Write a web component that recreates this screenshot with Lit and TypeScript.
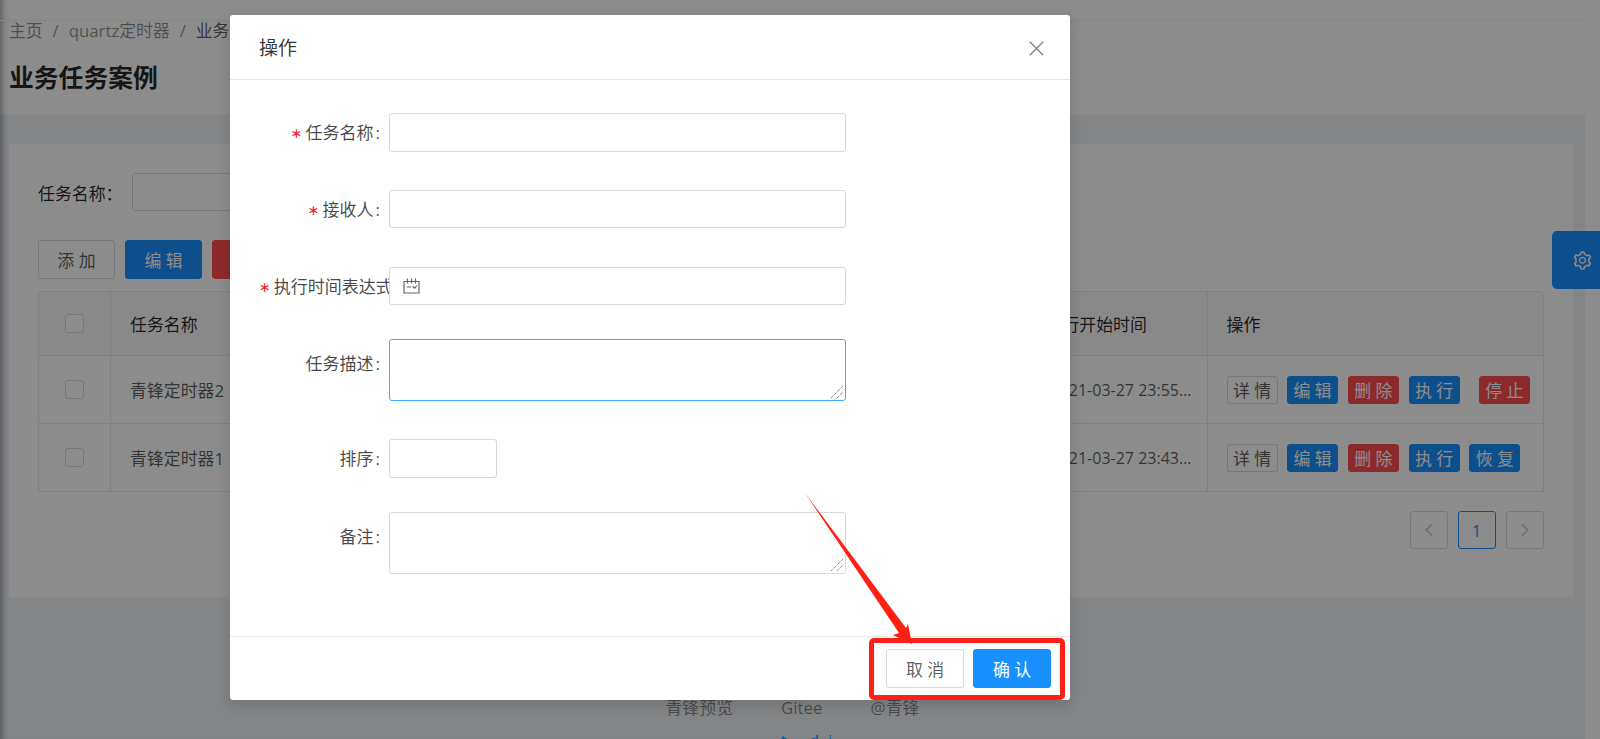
import { LitElement, html, css, svg } from "lit";
import { customElement } from "lit/decorators.js";

const GEAR = "M924.8 625.7l-65.5-56c3.1-19 4.7-38.4 4.7-57.8s-1.6-38.8-4.7-57.8l65.5-56a32.03 32.03 0 0 0 9.3-35.2l-.9-2.6a443.74 443.74 0 0 0-79.7-137.9l-1.8-2.1a32.12 32.12 0 0 0-35.1-9.5l-81.3 28.9c-30-24.6-63.5-44-99.7-57.6l-15.7-85a32.05 32.05 0 0 0-25.8-25.7l-2.7-.5c-52.1-9.4-106.9-9.4-159 0l-2.7.5a32.05 32.05 0 0 0-25.8 25.7l-15.8 85.4a351.86 351.86 0 0 0-99 57.4l-81.9-29.1a32 32 0 0 0-35.1 9.5l-1.8 2.1a446.02 446.02 0 0 0-79.7 137.9l-.9 2.6c-4.5 12.5-.8 26.5 9.3 35.2l66.3 56.6c-3.1 18.8-4.6 38-4.6 57.1 0 19.2 1.5 38.4 4.6 57.1L99 625.5a32.03 32.03 0 0 0-9.3 35.2l.9 2.6c18.1 50.4 44.9 96.9 79.7 137.9l1.8 2.1a32.12 32.12 0 0 0 35.1 9.5l81.9-29.1c29.8 24.5 63.1 43.9 99 57.4l15.8 85.4a32.05 32.05 0 0 0 25.8 25.7l2.7.5a449.4 449.4 0 0 0 159 0l2.7-.5a32.05 32.05 0 0 0 25.8-25.7l15.7-85a350 350 0 0 0 99.7-57.6l81.3 28.9a32 32 0 0 0 35.1-9.5l1.8-2.1c34.8-41.1 61.6-87.5 79.7-137.9l.9-2.6c4.5-12.3.8-26.3-9.3-35zM788.3 465.9c2.5 15.1 3.8 30.6 3.8 46.1s-1.3 31-3.8 46.1l-6.6 40.1 74.7 63.9a370.03 370.03 0 0 1-42.6 73.6L721 702.8l-31.4 25.8c-23.9 19.6-50.5 35-79.3 45.8l-38.1 14.3-17.9 97a377.5 377.5 0 0 1-85 0l-17.9-97.2-37.8-14.5c-28.5-10.8-55-26.2-78.7-45.7l-31.4-25.9-93.4 33.2c-17-22.9-31.2-47.6-42.6-73.6l75.5-64.5-6.5-40c-2.4-14.9-3.7-30.3-3.7-45.5 0-15.3 1.2-30.6 3.7-45.5l6.5-40-75.5-64.5c11.3-26.1 25.6-50.7 42.6-73.6l93.4 33.2 31.4-25.9c23.7-19.5 50.2-34.9 78.7-45.7l37.9-14.3 17.9-97.2c28.1-3.2 56.8-3.2 85 0l17.9 97 38.1 14.3c28.7 10.8 55.4 26.2 79.3 45.8l31.4 25.8 92.8-32.9c17 22.9 31.2 47.6 42.6 73.6L781.8 426l6.5 39.9zM512 326c-97.2 0-176 78.8-176 176s78.8 176 176 176 176-78.8 176-176-78.8-176-176-176zm79.2 255.2A111.6 111.6 0 0 1 512 614c-29.9 0-58-11.7-79.2-32.8A111.6 111.6 0 0 1 400 502c0-29.9 11.7-58 32.8-79.2C454 401.6 482.1 390 512 390c29.9 0 58 11.6 79.2 32.8A111.6 111.6 0 0 1 624 502c0 29.9-11.7 58-32.8 79.2z";

const rows = [
  { name: "青锋定时器2", who: "admin", desc: "业务任务", time: "2021-03-27 23:55:10", last: "停 止", lastCls: "red wide" },
  { name: "青锋定时器1", who: "admin", desc: "业务任务", time: "2021-03-27 23:43:25", last: "恢 复", lastCls: "blue" },
];

const grip = html`<svg class="grip" viewBox="0 0 14 14"><path d="M1 13 13 1M7 13l6-6" /></svg>`;

@customElement("app-root")
export class AppRoot extends LitElement {
  static styles = css`
    :host {
      display: block;
      position: relative;
      width: 1600px;
      height: 739px;
      overflow: hidden;
      background: #fff;
      font-family: "Open Sans", "Noto Sans CJK SC", sans-serif;
      font-size: 16.9px;
      color: rgba(0, 0, 0, 0.65);
    }
    * { box-sizing: border-box; }

    .main {
      width: 1585px;
      height: 739px;
      overflow: hidden;
      background: #f0f2f5;
      box-shadow: inset 7px 0 6px -5px rgba(0, 21, 41, 0.4);
    }
    .topbar {
      height: 21px;
      background: #fff;
      border-bottom: 1px solid #f5f5f5;
      box-shadow: inset 7px 0 6px -5px rgba(0, 21, 41, 0.4);
    }
    .head {
      height: 94px;
      background: #fff;
      padding: 0 9px;
      box-shadow: inset 7px 0 6px -5px rgba(0, 21, 41, 0.4);
    }
    .crumbs { display: flex; align-items: center; height: 18px; font-size: 16.8px; color: rgba(0, 0, 0, 0.45); white-space: nowrap; }
    .crumbs .sep { margin: 0 10px; }
    .crumbs .cur { color: rgba(0, 0, 0, 0.65); }
    .title { margin: 20px 0 0; font-size: 24.8px; line-height: 36px; font-weight: 600; color: rgba(0, 0, 0, 0.85); }

    .content { padding: 29px 12px 0 9px; }
    .card { height: 453px; background: #fff; padding: 29px 29px 0; }

    .search { display: flex; align-items: center; height: 38px; margin-bottom: 29px; color: rgba(0, 0, 0, 0.85); }
    .search .lbl { width: 94px; white-space: nowrap; }
    .search .field { width: 300px; height: 38px; border: 1px solid #d9d9d9; border-radius: 3px; }

    .toolbar { display: flex; gap: 10px; margin-bottom: 12px; }
    .btn {
      display: flex;
      align-items: center;
      justify-content: center;
      height: 39px;
      width: 77px;
      border: 1px solid #d9d9d9;
      border-radius: 3px;
      background: #fff;
      white-space: nowrap;
    }
    .btn.blue { background: #1890ff; border-color: #1890ff; color: #fff; }
    .btn.red { background: #ff4d4f; border-color: #ff4d4f; color: #fff; }

    .table { border: 1px solid #e8e8e8; border-radius: 3px 3px 0 0; width: 1505.5px; }
    .tr { display: grid; grid-template-columns: 72px 300px 300px 1fr 181px 335px; border-bottom: 1px solid #e8e8e8; height: 68px; }
    .tr.th { height: 64px; background: #fafafa; color: rgba(0, 0, 0, 0.85); }
    .tr:last-child { border-bottom: 0; height: 67px; }
    .td { display: flex; align-items: center; padding: 0 19px; border-right: 1px solid #e8e8e8; min-width: 0; white-space: nowrap; }
    .td:last-child { border-right: 0; }
    .td.check { justify-content: center; padding: 0; }
    .td.when { padding: 0 14px 0 24px; }
    .ell { overflow: hidden; white-space: nowrap; text-overflow: ellipsis; }
    .time { font-size: 16px; }
    .box { width: 19px; height: 19px; border: 1px solid #d9d9d9; border-radius: 3px; background: #fff; }
    .ops { gap: 9.7px; padding-right: 0; }
    .sm { flex: none; height: 28px; width: 51px; box-shadow: 0 1px 0 rgba(0, 0, 0, 0.02); }
    .sm.wide { margin-left: 9.5px; }

    .pager { display: flex; justify-content: flex-end; gap: 10px; margin-top: 19px; width: 1505.5px; }
    .pg { display: flex; align-items: center; justify-content: center; width: 38px; height: 38px; border: 1px solid #d9d9d9; border-radius: 3px; background: #fff; color: rgba(0, 0, 0, 0.25); }
    .pg.on { border-color: #1890ff; color: #1890ff; font-weight: 500; }
    .pg svg { width: 14px; height: 14px; }

    .footer { padding-top: 98px; text-align: center; }
    .links { display: flex; justify-content: center; gap: 48px; height: 26px; line-height: 26px; color: rgba(0, 0, 0, 0.45); }
    .copy { margin-top: 7px; color: #1890ff; line-height: 26px; padding-left: 28px; white-space: pre; }

    .gear {
      position: absolute;
      top: 231px;
      right: 0;
      width: 48px;
      height: 58px;
      padding-left: 12px;
      background: #1890ff;
      border-radius: 5px 0 0 5px;
      display: flex;
      align-items: center;
      justify-content: center;
      color: #fff;
    }
    .gear svg { width: 21px; height: 21px; fill: currentColor; }

    .mask { position: absolute; inset: 0; background: rgba(0, 0, 0, 0.45); }

    .modal {
      position: absolute;
      left: 230px;
      top: 15px;
      width: 840px;
      height: 685px;
      background: #fff;
      border-radius: 3px;
      box-shadow: 0 5px 14px rgba(0, 0, 0, 0.15);
      display: flex;
      flex-direction: column;
    }
    .m-head {
      flex: none;
      height: 65px;
      border-bottom: 1px solid #e8e8e8;
      padding: 0 19px 0 29px;
      display: flex;
      align-items: center;
      justify-content: space-between;
    }
    .m-title { font-size: 19px; color: rgba(0, 0, 0, 0.8); line-height: 1; margin-top: 2px; }
    .close { width: 15px; height: 15px; margin-right: 7px; margin-top: 2px; stroke: rgba(0, 0, 0, 0.5); stroke-width: 1.3; fill: none; }
    .m-body { flex: 1; padding: 33px 0 0 29px; }
    .row { display: flex; align-items: flex-start; margin-bottom: 38px; }
    .row.next { margin-bottom: 39px; }
    .row.tight { margin-bottom: 34px; }
    .label {
      flex: none;
      width: 130px;
      height: 38px;
      line-height: 39px;
      font-size: 17px;
      overflow: hidden;
      white-space: nowrap;
      text-align: right;
      color: rgba(0, 0, 0, 0.72);
    }
    .label.tall { line-height: 50px; height: 50px; }
    .star { color: #f5222d; font-family: "DejaVu Sans", sans-serif; font-size: 14px; margin-right: 3px; vertical-align: 1px; }
    .colon { margin: 0 9px 0 2px; }
    .input {
      display: block;
      width: 457px;
      height: 38px;
      border: 1px solid #d9d9d9;
      border-radius: 3px;
      background: #fff;
      padding: 0 13px;
      outline: none;
      font: inherit;
    }
    .input.h39 { height: 39px; }
    .input.num { width: 108px; height: 39px; }
    .area-wrap { position: relative; display: block; height: 62px; }
    .area { height: 62px; padding: 5px 13px; resize: none; }
    .area.focus { border-color: #40a9ff; }
    .grip {
      position: absolute;
      right: 2px;
      bottom: 2px;
      width: 14px;
      height: 14px;
      fill: none;
      stroke: #555;
      stroke-width: 1;
      stroke-dasharray: 1 1;
    }
    .cron { display: flex; align-items: center; }
    .cron svg { width: 18px; height: 16px; margin-left: 0; }

    .m-foot {
      flex: none;
      height: 64px;
      border-top: 1px solid #e8e8e8;
      padding: 12px 19px 0 0;
      display: flex;
      justify-content: flex-end;
      gap: 9px;
    }
    .m-foot .btn { width: 78px; }

    .mark {
      position: absolute;
      left: 869px;
      top: 638px;
      width: 196px;
      height: 62px;
      border: 5px solid #ff2015;
      border-radius: 5px;
    }
    .arrow { position: absolute; left: 800px; top: 490px; width: 120px; height: 160px; fill: #ff2015; }
  `;

  render() {
    return html`
      <div class="main">
        <div class="topbar"></div>
        <div class="head">
          <div class="crumbs">
            <span>主页</span><span class="sep">/</span>
            <span>quartz定时器</span><span class="sep">/</span>
            <span class="cur">业务任务案例</span>
          </div>
          <h1 class="title">业务任务案例</h1>
        </div>
        <div class="content">
          <div class="card">
            <div class="search"><span class="lbl">任务名称：</span><div class="field"></div></div>
            <div class="toolbar">
              <div class="btn">添 加</div>
              <div class="btn blue">编 辑</div>
              <div class="btn red">删 除</div>
            </div>
            <div class="table">
              <div class="tr th">
                <div class="td check"><div class="box"></div></div>
                <div class="td">任务名称</div>
                <div class="td">接收人</div>
                <div class="td">任务描述</div>
                <div class="td"><span class="ell">执行开始时间</span></div>
                <div class="td">操作</div>
              </div>
              ${rows.map(
                (r) => html`
                  <div class="tr">
                    <div class="td check"><div class="box"></div></div>
                    <div class="td">${r.name}</div>
                    <div class="td">${r.who}</div>
                    <div class="td">${r.desc}</div>
                    <div class="td when"><span class="ell time">${r.time}</span></div>
                    <div class="td ops">
                      <div class="btn sm">详 情</div>
                      <div class="btn sm blue">编 辑</div>
                      <div class="btn sm red">删 除</div>
                      <div class="btn sm blue">执 行</div>
                      <div class="btn sm ${r.lastCls}">${r.last}</div>
                    </div>
                  </div>
                `
              )}
            </div>
            <div class="pager">
              <div class="pg"><svg viewBox="0 0 14 14" fill="none" stroke="currentColor" stroke-width="1.2"><path d="M10 1.5 4 7l6 5.5" /></svg></div>
              <div class="pg on">1</div>
              <div class="pg"><svg viewBox="0 0 14 14" fill="none" stroke="currentColor" stroke-width="1.2"><path d="m4 1.5 6 5.5-6 5.5" /></svg></div>
            </div>
          </div>
        </div>
        <div class="footer">
          <div class="links"><span>青锋预览</span><span>Gitee</span><span>@青锋</span></div>
          <div class="copy">t     d  i</div>
        </div>
      </div>

      <div class="gear">
        <svg viewBox="0 0 1024 1024"><path d="${GEAR}" /></svg>
      </div>

      <div class="mask"></div>

      <div class="modal">
        <div class="m-head">
          <span class="m-title">操作</span>
          <svg class="close" viewBox="0 0 15 15"><path d="M.8.8l13.4 13.4M14.2.8.8 14.2" /></svg>
        </div>
        <div class="m-body">
          <div class="row">
            <div class="label"><span class="star">∗</span>任务名称<span class="colon">:</span></div>
            <input class="input h39" />
          </div>
          <div class="row next">
            <div class="label"><span class="star">∗</span>接收人<span class="colon">:</span></div>
            <input class="input" />
          </div>
          <div class="row tight">
            <div class="label"><span class="star">∗</span>执行时间表达式<span class="colon">:</span></div>
            <div class="input cron">
              <svg viewBox="0 0 18 16" fill="none" stroke="#666" stroke-width="1.2">
                ${svg`<path d="M1 3.5h15V15H1zM4.5 .5v5M8.5 .5v5M12.5 .5v5M4 9h4M9.5 8.2l2 2 2.5-2.5" />`}
              </svg>
            </div>
          </div>
          <div class="row">
            <div class="label tall">任务描述<span class="colon">:</span></div>
            <div class="area-wrap"><textarea class="input area focus"></textarea>${grip}</div>
          </div>
          <div class="row tight">
            <div class="label">排序<span class="colon">:</span></div>
            <input class="input num" />
          </div>
          <div class="row">
            <div class="label tall">备注<span class="colon">:</span></div>
            <div class="area-wrap"><textarea class="input area"></textarea>${grip}</div>
          </div>
        </div>
        <div class="m-foot">
          <div class="btn">取 消</div>
          <div class="btn blue">确 认</div>
        </div>
      </div>

      <div class="mark"></div>
      <svg class="arrow" viewBox="800 490 120 160"><polygon points="805,493 906,628 908,624 912,644 893,635 899,633" /></svg>
    `;
  }
}
